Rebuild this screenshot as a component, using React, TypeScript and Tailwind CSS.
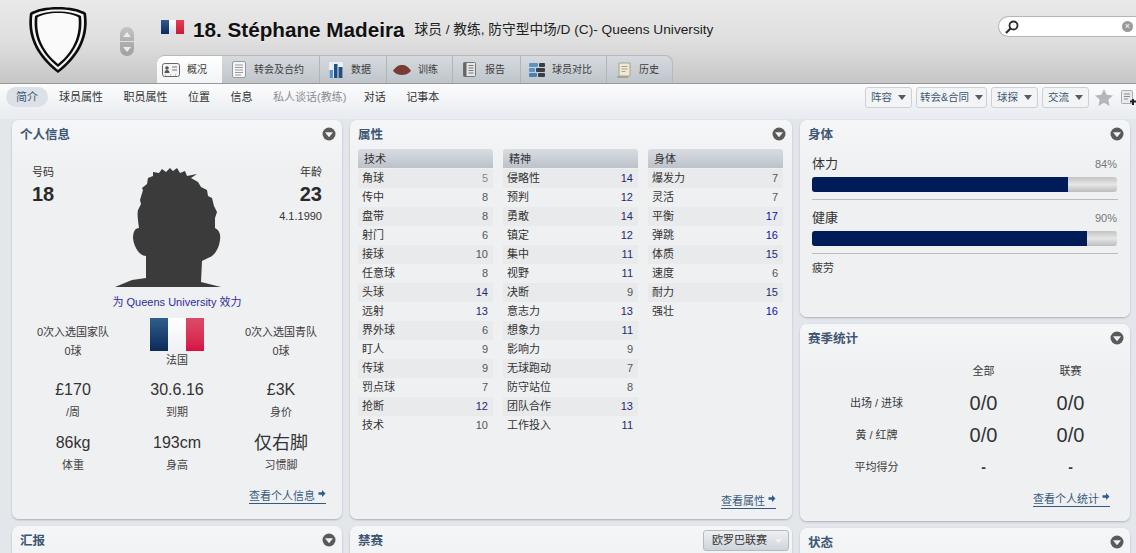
const sans = 'font-["Liberation_Sans","Noto_Sans_CJK_SC",sans-serif]';

const tabs = [
	{ label: '概况', tabClass: 'w-[65px] pl-[5px] gap-[7px]', icon: 'card' },
	{ label: '转会及合约', tabClass: 'w-[98px] pl-[10px] gap-[8px]', icon: 'doc' },
	{ label: '数据', tabClass: 'w-[67px] pl-[9px] gap-[8px]', icon: 'chart' },
	{ label: '训练', tabClass: 'w-[66px] pl-[6px] gap-[7px]', icon: 'ball' },
	{ label: '报告', tabClass: 'w-[68px] pl-[10px] gap-[9px]', icon: 'book' },
	{ label: '球员对比', tabClass: 'w-[86px] pl-[8px] gap-[7px]', icon: 'compare' },
	{ label: '历史', tabClass: 'w-[66px] pl-[10px] gap-[8px]', icon: 'scroll' }
];

const subNav = ['球员属性', '职员属性', '位置', '信息', '私人谈话(教练)', '对话', '记事本'];

const technical: [string, number][] = [
	['角球', 5], ['传中', 8], ['盘带', 8], ['射门', 6], ['接球', 10], ['任意球', 8], ['头球', 14],
	['远射', 13], ['界外球', 6], ['盯人', 9], ['传球', 9], ['罚点球', 7], ['抢断', 12], ['技术', 10]
];
const mental: [string, number][] = [
	['侵略性', 14], ['预判', 12], ['勇敢', 14], ['镇定', 12], ['集中', 11], ['视野', 11], ['决断', 9],
	['意志力', 13], ['想象力', 11], ['影响力', 9], ['无球跑动', 7], ['防守站位', 8], ['团队合作', 13], ['工作投入', 11]
];
const physical: [string, number][] = [
	['爆发力', 7], ['灵活', 7], ['平衡', 17], ['弹跳', 16], ['体质', 15], ['速度', 6], ['耐力', 15], ['强壮', 16]
];

const TabIcon = ({ name }: { name: string }) => {
	if (name === 'card') {
		return (
			<svg width="18" height="14" viewBox="0 0 18 14">
				<rect x="0.5" y="0.5" width="17" height="13" rx="2" fill="#f4f4f4" stroke="#666" />
				<circle cx="5" cy="5" r="1.8" fill="#555" />
				<path d="M2.5 10c0-2 1-3 2.5-3s2.500 1 2.500 3z" fill="#555" />
				<path d="M10 4h5M10 7h5" stroke="#777" />
				<path d="M3 12h1M8 12h1M13 12h1" stroke="#999" />
			</svg>
		);
	}
	if (name === 'doc') {
		return (
			<svg width="14" height="17" viewBox="0 0 14 17">
				<rect x="0.5" y="0.5" width="13" height="16" rx="1.5" fill="#f6f6f6" stroke="#9a9a9a" />
				<path d="M3 4h8M3 6.5h8M3 9h8M3 11.5h8M3 14h6" stroke="#9a9a9a" />
			</svg>
		);
	}
	if (name === 'chart') {
		return (
			<svg width="14" height="16" viewBox="0 0 14 16">
				<rect width="14" height="16" rx="1" fill="#e9eef3" />
				<rect x="0.5" y="8" width="3.5" height="8" fill="#5b93c7" />
				<rect x="5" y="2" width="3.5" height="14" fill="#1f4f87" />
				<rect x="9.5" y="5" width="4" height="11" fill="#274d7a" />
			</svg>
		);
	}
	if (name === 'ball') {
		return (
			<svg width="18" height="12" viewBox="0 0 18 12">
				<path d="M0 7C3 2 6 1 9 1s6 1 9 6c-3 3-6 4-9 4S3 10 0 7z" fill="#7a3b30" />
			</svg>
		);
	}
	if (name === 'book') {
		return (
			<svg width="13" height="15" viewBox="0 0 13 15">
				<rect x="0.5" y="0.5" width="12" height="14" rx="1" fill="#e6e6e6" stroke="#777" />
				<rect x="0.5" y="0.5" width="3" height="14" fill="#666" />
				<path d="M5.5 3.5h5M5.5 6h5M5.5 8.500h5M5.500 11h5" stroke="#777" />
			</svg>
		);
	}
	if (name === 'compare') {
		return (
			<svg width="16" height="14" viewBox="0 0 16 14">
				<rect x="0" y="0" width="9" height="4" rx="1" fill="#5b93c7" />
				<rect x="10" y="0" width="6" height="4" rx="1" fill="#3a3f45" />
				<rect x="0" y="5" width="6" height="4" rx="1" fill="#5b93c7" />
				<rect x="7" y="5" width="9" height="4" rx="1" fill="#3a3f45" />
				<rect x="0" y="10" width="8" height="4" rx="1" fill="#4a80b4" />
				<rect x="9" y="10" width="7" height="4" rx="1" fill="#3a3f45" />
			</svg>
		);
	}
	return (
		<svg width="14" height="16" viewBox="0 0 14 16">
			<path d="M2 1h11v13H2z" fill="#efe9d6" stroke="#a8a48f" />
			<path d="M0.500 14.500h10.500v1H0.500z" fill="#c9c3aa" stroke="#a8a48f" />
			<path d="M4.500 4.500h6M4.500 7h6M4.500 9.500h4" stroke="#a8a48f" />
		</svg>
	);
};

const Crest = () => (
	<svg width="60" height="67" viewBox="0 0 60 67" className="shrink-0">
		<path d="M30 0C18 0 8 2 2 6C-1 26 5 47 30 66C55 47 61 26 58 6C52 2 42 0 30 0Z" fill="#0c0c0c" />
		<path d="M30 2.500C19 2.500 10 4.500 4.500 7.500C2 26 8 45 30 63C52 45 58 26 55.500 7.500C50 4.500 41 2.500 30 2.500Z" fill="#f4f4f4" />
		<path d="M30 4.500C20 4.500 12 6.500 7 9C5 26 10 44 30 60C50 44 55 26 53 9C48 6.500 40 4.500 30 4.500Z" fill="#0c0c0c" />
		<path d="M30 6C21 6 13 8 9.500 10.500C8 27 13 43 30 57C47 43 52 27 50.500 10.500C47 8 39 6 30 6Z" fill="#fafafa" />
	</svg>
);

const Silhouette = () => (
	<svg width="106" height="119" viewBox="0 0 106 119" className="shrink-0">
		<path
			d="M0 119L17 112L31 110L31 88C25 88 19 80 18 70C18 64 20 60 24 60C23 52 22 46 23 42L26 36L25 32L28 22L27 20L32 16L33 10L38 8L38 4L44 5L47 1L51 4L55 0L58 3L62 0L65 5L70 3L72 8L82 6L76 10L83 14L86 19L92 22L93 28L97 30L99 38L102 44L100 50L100 60C104 62 106 66 105 72C104 80 100 88 93 90L87 93L86 114L106 119Z"
			fill="#3b3b3b"
		/>
	</svg>
);

const Collapse = () => (
	<svg width="14" height="14" viewBox="0 0 14 14" className="-mt-[2px] shrink-0">
		<circle cx="7" cy="7" r="6.500" fill="#5a5a5a" />
		<path d="M3 5.200h8L7 10.200z" fill="#f2f2f2" />
	</svg>
);

const Caret = () => (
	<svg width="8" height="5" viewBox="0 0 8 5">
		<path d="M0 0h8L4 5z" fill="#555c66" />
	</svg>
);

const MoreLink = ({ label }: { label: string }) => (
	<div className="flex justify-end">
		<span className="flex items-start gap-[3px] border-b border-[#33597f] text-[11px] leading-[13px] text-[#3a5a7c]">
			{label}
			<svg width="8" height="7" viewBox="0 0 8 8">
				<path d="M0 2.500h4V0l4 4-4 4V5.500H0z" fill="#2f5d8a" />
			</svg>
		</span>
	</div>
);

const Panel = ({
	title,
	className,
	children,
	action
}: {
	title: string;
	className: string;
	children?: React.ReactNode;
	action?: React.ReactNode;
}) => (
	<section
		className={`flex flex-col rounded-[7px] bg-gradient-to-b from-[#f5f6f7] from-0% to-[#eff0f2] to-[50px] shadow-[0_1px_2px_rgba(120,130,140,0.55)] ${className}`}
	>
		<div className="flex h-[29px] shrink-0 items-center justify-between pr-[6px] pl-[8px]">
			<h2 className="mt-[2px] text-[12.500px] font-bold text-[#3d5673]">{title}</h2>
			{action ?? <Collapse />}
		</div>
		{children}
	</section>
);

const valueColor = (value: number) => {
	if (value >= 16) return 'text-[#0c0ca8]';
	if (value >= 11) return 'text-[#1f2a70]';
	if (value === 5) return 'text-[#888888]';
	return 'text-[#555555]';
};

const AttrColumn = ({ title, rows }: { title: string; rows: [string, number][] }) => (
	<div className="w-[135px]">
		<div className="mb-px h-[19px] rounded-t-[3px] bg-gradient-to-b from-[#d9dde2] to-[#bcc2ca] pl-[6px] text-[11px] leading-[21px] text-[#333333]">
			{title}
		</div>
		{rows.map(([name, value], index) => (
			<div
				key={name}
				className={`flex h-[19px] items-center justify-between pr-[5px] pl-[4px] text-[11px] text-[#333333] ${index % 2 === 0 ? 'bg-[#e9eaeb]' : ''}`}
			>
				<span>{name}</span>
				<span className={valueColor(value)}>{value}</span>
			</div>
		))}
	</div>
);

const Stat = ({ value, label, big }: { value: string; label: string; big?: boolean }) => (
	<div className="flex flex-col items-center">
		<span className={`${big ? 'text-[18px]' : 'text-[16px]'} h-[22px] leading-[22px] text-[#333333]`}>{value}</span>
		<span className="mt-[2px] text-[11px] leading-[18px] text-[#444444]">{label}</span>
	</div>
);

const Bar = ({ label, value, fill }: { label: string; value: string; fill: string }) => (
	<div>
		<div className="flex h-[23px] items-start justify-between pr-[13px] leading-[20px]">
			<span className="text-[13px] text-[#333333]">{label}</span>
			<span className="text-[11px] text-[#777777]">{value}</span>
		</div>
		<div className="h-[15px] w-[305px] overflow-hidden rounded-[3px] bg-gradient-to-b from-[#c4c4c4] via-[#e6e6e6] to-[#bdbdbd]">
			<div className={`h-full bg-[#001c58] ${fill}`} />
		</div>
		<div className="mt-[7px] h-px w-[306px] bg-[#bcbcbc]" />
	</div>
);

export default function App() {
	return (
		<div className={`h-[553px] w-[1136px] overflow-hidden bg-[#e3e7eb] ${sans}`}>
			<header className="flex h-[84px] border-b border-[#979797] bg-gradient-to-b from-[#e9e9e9] via-[#dfdfdf] via-50% to-[#c6c6c6]">
				<div className="mt-[7px] ml-[28px]">
					<Crest />
				</div>
				<div className="mt-[27px] ml-[32px] flex h-[29px] w-[14px] flex-col gap-px overflow-hidden rounded-[7px]">
					<div className="flex h-[14px] items-center justify-center bg-gradient-to-b from-[#c4c4c4] to-[#b0b0b0]">
						<svg width="8" height="5" viewBox="0 0 8 5"><path d="M0 5h8L4 0z" fill="#ececec" /></svg>
					</div>
					<div className="flex h-[14px] items-center justify-center bg-gradient-to-b from-[#b0b0b0] to-[#a0a0a0]">
						<svg width="8" height="5" viewBox="0 0 8 5"><path d="M0 0h8L4 5z" fill="#ececec" /></svg>
					</div>
				</div>
				<div className="ml-[23px] flex flex-1 flex-col">
					<div className="flex h-[55px] items-start">
						<div className="mt-[20px] ml-[4px] flex h-[14px] w-[23px] overflow-hidden">
							<div className="w-1/3 bg-gradient-to-b from-[#2f5b8c] to-[#0c2a5a]" />
							<div className="w-1/3 bg-gradient-to-b from-[#ffffff] to-[#d8dbe2]" />
							<div className="w-1/3 bg-gradient-to-b from-[#ea3b55] to-[#c41b3c]" />
						</div>
						<h1 className="mt-[17px] ml-[9px] text-[20.700px] leading-[26px] font-bold text-[#111111] [text-shadow:0_1px_1px_rgba(255,255,255,0.5)]">
							18. Stéphane Madeira
						</h1>
						<span className="mt-[21px] ml-[10px] text-[13.700px] leading-[18px] text-[#222222]">
							球员 / 教练, 防守型中场/D (C)- Queens University
						</span>
					</div>
					<nav className="flex h-[28px] w-[516px] overflow-hidden rounded-t-[8px] border-t border-r border-[#b3b9bf] bg-gradient-to-b from-[#d6dade] to-[#bec5cb]">
						{tabs.map((tab, index) => (
							<div
								key={tab.label}
								className={`flex shrink-0 items-center text-[10px] ${tab.tabClass} ${index === 0 ? 'bg-gradient-to-b from-[#ffffff] to-[#f2f4f7] text-[#333333]' : 'border-r border-[#aeb5bb] text-[#3c3c3c]'}`}
							>
								<TabIcon name={tab.icon} />
								{tab.label}
							</div>
						))}
					</nav>
				</div>
				<div className="mt-[16px] flex h-[21px] w-[138px] items-center justify-between rounded-l-full border border-r-0 border-[#b5b5b5] bg-white pr-[3px] pl-[6px]">
					<svg width="14" height="14" viewBox="0 0 14 14">
						<circle cx="8.500" cy="5.500" r="4" fill="none" stroke="#2b2b2b" strokeWidth="1.800" />
						<path d="M5.500 8.500L1 13" stroke="#2b2b2b" strokeWidth="2.200" />
					</svg>
					<span className="flex h-[11px] w-[11px] items-center justify-center rounded-full bg-[#9a9a9a] text-[9px] leading-none text-white">
						×
					</span>
				</div>
			</header>

			<div className="flex h-[35px] items-start justify-between bg-gradient-to-b from-[#fbfcfd] to-[#e8ebef] pt-[3px]">
				<div className="flex items-center pl-[6px] text-[11px] text-[#333333]">
					<span className="flex h-[20px] w-[42px] items-center justify-center rounded-full bg-[#dbe1e7] text-[#3d5673]">简介</span>
					{subNav.map((item) => (
						<span
							key={item}
							className={`ml-[11px] pt-px ${item.startsWith('私人') ? 'mr-[6.500px] text-[#8a8d91]' : 'mr-[9.500px]'}`}
						>
							{item}
						</span>
					))}
				</div>
				<div className="flex items-center gap-[4px]">
					{['阵容', '转会&合同', '球探', '交流'].map((item, index) => (
						<button
							key={item}
							className={`flex h-[21px] items-center justify-center gap-[6px] rounded-[3px] border border-[#ccd0d5] bg-[#f2f4f6] text-[10.500px] text-[#3d5673] ${index === 1 ? 'w-[71px]' : 'w-[47px]'}`}
						>
							{item}
							<Caret />
						</button>
					))}
					<svg width="18" height="17" viewBox="0 0 18 17" className="ml-[2px]">
						<path d="M9 0l2.700 5.800 6.300.7-4.700 4.200 1.300 6.300L9 13.800 3.400 17l1.300-6.300L0 6.500l6.300-.7z" fill="#b4b7ba" />
					</svg>
					<svg width="15" height="16" viewBox="0 0 15 16" className="ml-[4px]">
						<rect x="0.500" y="0.500" width="11" height="13" rx="1" fill="#e8eaec" stroke="#a9adb2" />
						<path d="M3 4h6M3 6.500h6M3 9h4" stroke="#8a8d91" />
						<path d="M9 11.500h6M12 9v6" stroke="#222222" strokeWidth="2" />
					</svg>
				</div>
			</div>

			<main className="flex gap-[8px] pt-[1px] pl-[12px]">
				<div className="flex w-[330px] flex-col gap-[7px]">
					<Panel title="个人信息" className="h-[399px]">
						<div className="flex h-[147px] justify-between pr-[20px] pl-[20px] text-[#333333]">
							<div className="w-[44px] pt-[16px]">
								<div className="text-[11px] leading-[14px]">号码</div>
								<div className="mt-[3px] text-[20px] leading-[24px] font-bold text-[#2a2a2a]">18</div>
							</div>
							<div className="-ml-[19px] pt-[19px]">
								<Silhouette />
							</div>
							<div className="w-[44px] pt-[16px] text-right">
								<div className="text-[11px] leading-[14px]">年龄</div>
								<div className="mt-[3px] text-[20px] leading-[24px] font-bold text-[#2a2a2a]">23</div>
								<div className="text-[11px] leading-[20px] whitespace-nowrap">4.1.1990</div>
							</div>
						</div>
						<div className="-mt-[4px] h-[20px] text-center text-[11px] leading-[20px] text-[#2d2d9a]">
							为 Queens University 效力
						</div>
						<div className="mt-[6px] grid h-[52px] grid-cols-3 px-[9px] text-[11px] text-[#3a3a3a]">
							<div className="flex flex-col items-center pt-[6px]">
								<span className="leading-[16px]">0次入选国家队</span>
								<span className="mt-[2px] leading-[18px]">0球</span>
							</div>
							<div className="flex flex-col items-center">
								<div className="flex h-[33px] w-[55px] overflow-hidden">
									<div className="w-1/3 bg-gradient-to-b from-[#2f5f8c] to-[#0c2a5a]" />
									<div className="w-1/3 bg-gradient-to-b from-[#ffffff] to-[#eef0f5]" />
									<div className="w-1/3 bg-gradient-to-b from-[#d94b68] to-[#d80c45]" />
								</div>
								<span className="leading-[18px]">法国</span>
							</div>
							<div className="flex flex-col items-center pt-[6px]">
								<span className="leading-[16px]">0次入选国青队</span>
								<span className="mt-[2px] leading-[18px]">0球</span>
							</div>
						</div>
						<div className="mt-[9px] grid grid-cols-3 px-[9px]">
							<Stat value="£170" label="/周" />
							<Stat value="30.6.16" label="到期" />
							<Stat value="£3K" label="身价" />
						</div>
						<div className="mt-[11px] grid grid-cols-3 px-[9px]">
							<Stat value="86kg" label="体重" />
							<Stat value="193cm" label="身高" />
							<Stat value="仅右脚" label="习惯脚" big />
						</div>
						<div className="mt-[16px] pr-[16px]">
							<MoreLink label="查看个人信息" />
						</div>
					</Panel>
					<Panel title="汇报" className="h-[60px]" />
				</div>

				<div className="flex w-[442px] flex-col gap-[7px]">
					<Panel title="属性" className="h-[399px]">
						<div className="flex gap-[10px] pl-[8px]">
							<AttrColumn title="技术" rows={technical} />
							<AttrColumn title="精神" rows={mental} />
							<AttrColumn title="身体" rows={physical} />
						</div>
						<div className="mt-auto pr-[16px] pb-[10px]">
							<MoreLink label="查看属性" />
						</div>
					</Panel>
					<Panel
						title="禁赛"
						className="h-[60px]"
						action={
							<span className="-mr-[3px] flex h-[21px] w-[86px] items-center justify-between rounded-[3px] border border-[#b4bac1] bg-gradient-to-b from-[#eef0f2] to-[#cfd4da] pr-[6px] pl-[8px] text-[11px] text-[#333333]">
								欧罗巴联赛
								<svg width="7" height="4" viewBox="0 0 7 4">
									<path d="M0 0h7L3.500 4z" fill="#f2f2f2" />
								</svg>
							</span>
						}
					/>
				</div>

				<div className="flex w-[330px] flex-col gap-[7px]">
					<Panel title="身体" className="h-[197px]">
						<div className="mt-[5px] flex flex-col gap-[8px] pl-[12px]">
							<Bar label="体力" value="84%" fill="w-[84%]" />
							<Bar label="健康" value="90%" fill="w-[90%]" />
						</div>
						<div className="mt-[5px] pl-[12px] text-[11px] leading-[18px] text-[#3a3a3a]">疲劳</div>
					</Panel>
					<Panel title="赛季统计" className="h-[197px]">
						<div className="mt-[3px] grid grid-cols-[127px_87px_87px] items-center px-[13px] text-center text-[11px] text-[#3a3a3a]">
							<span />
							<span className="flex h-[31px] items-center justify-center">全部</span>
							<span className="flex h-[31px] items-center justify-center">联赛</span>
							<span>出场 / 进球</span>
							<span className="flex h-[32px] items-center justify-center text-[20px] text-[#333333]">0/0</span>
							<span className="flex h-[32px] items-center justify-center text-[20px] text-[#333333]">0/0</span>
							<span>黄 / 红牌</span>
							<span className="flex h-[32px] items-center justify-center text-[20px] text-[#333333]">0/0</span>
							<span className="flex h-[32px] items-center justify-center text-[20px] text-[#333333]">0/0</span>
							<span>平均得分</span>
							<span className="flex h-[32px] items-center justify-center text-[14px] font-bold">-</span>
							<span className="flex h-[32px] items-center justify-center text-[14px] font-bold">-</span>
						</div>
						<div className="mt-auto pr-[20px] pb-[14px]">
							<MoreLink label="查看个人统计" />
						</div>
					</Panel>
					<Panel title="状态" className="h-[60px]" />
				</div>
			</main>
		</div>
	);
}
